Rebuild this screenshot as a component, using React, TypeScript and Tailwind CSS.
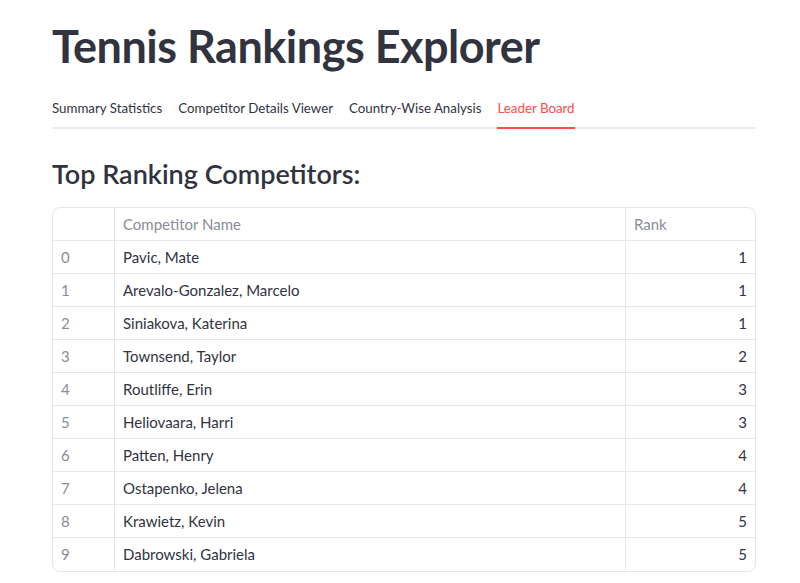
import React from "react";

const rows: [number, string, number][] = [
  [0, "Pavic, Mate", 1],
  [1, "Arevalo-Gonzalez, Marcelo", 1],
  [2, "Siniakova, Katerina", 1],
  [3, "Townsend, Taylor", 2],
  [4, "Routliffe, Erin", 3],
  [5, "Heliovaara, Harri", 3],
  [6, "Patten, Henry", 4],
  [7, "Ostapenko, Jelena", 4],
  [8, "Krawietz, Kevin", 5],
  [9, "Dabrowski, Gabriela", 5],
];

const tabs = ["Summary Statistics", "Competitor Details Viewer", "Country-Wise Analysis", "Leader Board"];

export default function App() {
  return (
    <div
      className="w-[800px] h-[583px] bg-white overflow-hidden text-[#31333f]"
      style={{ fontFamily: "Lato, 'Noto Sans', sans-serif" }}
    >
      <div className="pl-[52px] pr-[44px]">
        <h1 className="pt-[22px] text-[45px] leading-[48px] font-bold tracking-[-0.5px] h-[90px]">
          Tennis Rankings Explorer
        </h1>
        <div className="flex gap-4 border-b-2 border-[#eaeaec] h-[39px]">
          {tabs.map((t, i) => (
            <div
              key={t}
              className={
                "pt-[8px] text-[13.3px] leading-[20px] -mb-[2px] " +
                (i === 3 ? "text-[#ff4b4b] border-b-2 border-[#ff4b4b]" : "text-[#31333f]")
              }
            >
              {t}
            </div>
          ))}
        </div>
        <h3 className="mt-[28px] text-[27px] leading-[34px] font-semibold h-[44px]">
          Top Ranking Competitors:
        </h3>
        <div className="mt-[6px] border border-[#e6e6e8] rounded-[8px] overflow-hidden text-[15px]">
          <div className="grid grid-cols-[62px_511px_1fr] h-[33px] border-b border-[#e6e6e8] text-[#8a8c96]">
            <div className="border-r border-[#e6e6e8]"></div>
            <div className="border-r border-[#e6e6e8] px-2 flex items-center">Competitor Name</div>
            <div className="px-2 flex items-center">Rank</div>
          </div>
          {rows.map(([i, n, r], idx) => (
            <div
              key={i}
              className={
                "grid grid-cols-[62px_511px_1fr] h-[33px] " +
                (idx < rows.length - 1 ? "border-b border-[#e6e6e8]" : "")
              }
            >
              <div className="border-r border-[#e6e6e8] px-2 flex items-center text-[#8a8c96]">{i}</div>
              <div className="border-r border-[#e6e6e8] px-2 flex items-center">{n}</div>
              <div className="px-2 flex items-center justify-end">{r}</div>
            </div>
          ))}
        </div>
      </div>
    </div>
  );
}
